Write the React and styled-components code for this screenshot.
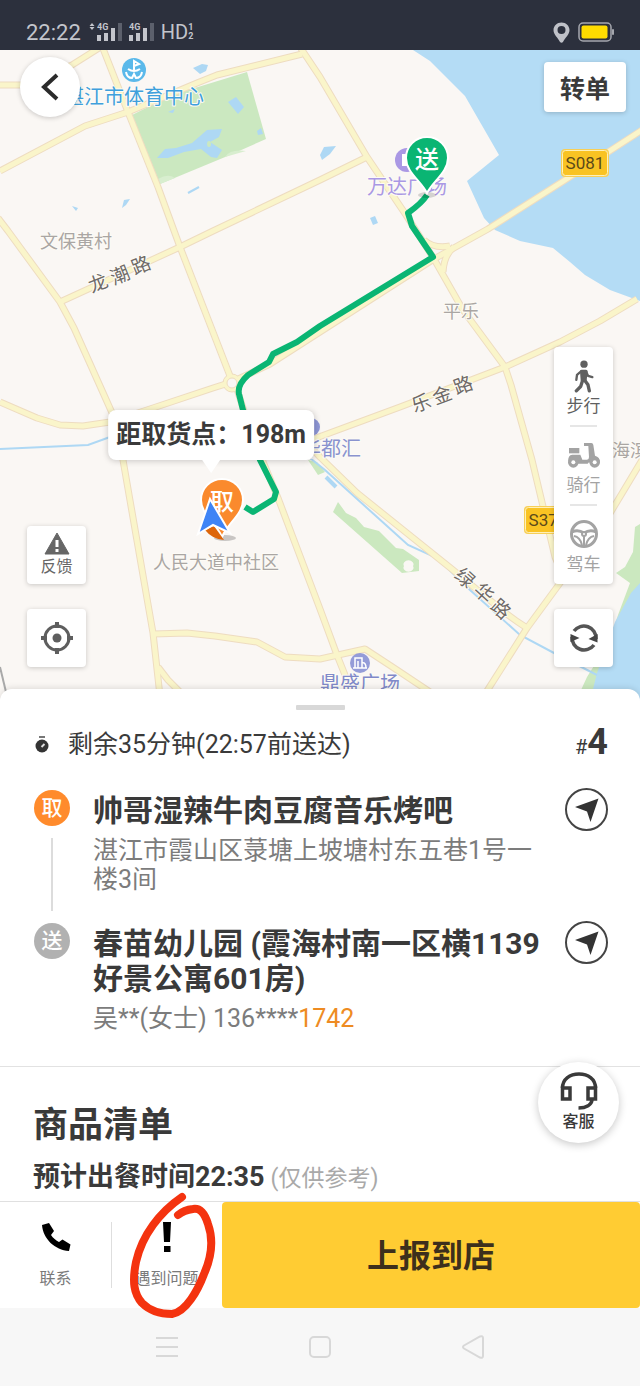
import React from 'react';
import styled, { createGlobalStyle } from 'styled-components';

const GlobalStyle = createGlobalStyle`
  * {
    box-sizing: border-box;
  }
  body {
    margin: 0;
    background: #fff;
    color: #3a3a3a;
    font-family: Roboto, 'Noto Sans CJK SC', sans-serif;
  }
  button {
    border: 0;
    padding: 0;
    background: none;
    color: inherit;
    font: inherit;
    cursor: pointer;
  }
`;

/* ---------- map data ---------- */

const roads = [
  'M0 85 L22 85 L72 65 L99 48',
  'M0 171 L85 126 L128 112 L197 83 L217 75 L302 54',
  'M102 46 L128 112 L158 187 L180 247 L230 376',
  'M298 44 L320 77 L367 157 L406 215 L434 259 L463 310 L505 367 L511 385 L532 460 L555 557 L565 580',
  'M367 157 L320 180 L213 231 L180 247 L60 302',
  'M-2 218 L8 231 L60 302 L74 328 L113 415 L123 460 L153 633 L161 705',
  'M158 667 L168 680 L192 704',
  'M0 402 L37 418 L60 425 L83 426 L110 422 L147 410 L213 388 L232 382 L270 364 L434 259 L488 229 L565 180 L642 130',
  'M637 299 L600 321 L560 342 L505 367 L400 407 L308 441',
  'M236 386 L250 430 L278 498 L320 609 L337 655 L345 675 L352 705',
  'M300 436 L320 457 L357 493 L453 570 L503 611 Q514 620 527 628',
  'M480 702 L527 628 L560 583 L600 530 L642 460',
  'M153 634 L187 633 L215 636 L257 642 L285 657 L320 659 L365 649 L397 670 L445 702',
  'M424 240 Q434 249 450 246',
  'M443 272 Q444 255 454 247',
];

const roadNames = [
  { angle: -22, glyphs: [['龙', 98, 283], ['潮', 120, 275], ['路', 141, 265]] },
  { angle: -20, glyphs: [['乐', 421, 403], ['金', 442, 395], ['路', 463, 385]] },
  { angle: 42, glyphs: [['绿', 465, 578], ['华', 484, 593], ['路', 501, 609]] },
];

const places = [
  { text: '文保黄村', x: 76, y: 248 },
  { text: '平乐', x: 461, y: 318 },
  { text: '人民大道中社区', x: 216, y: 569 },
  { text: '海滨', x: 630, y: 457 },
  { text: '湛江市体育中心', x: 134, y: 104, size: 20, fill: '#3fa0dc' },
  { text: '万达广场', x: 407, y: 194, size: 20, fill: '#aa98e4' },
  { text: '华都汇', x: 331, y: 456, size: 20, fill: '#8a93cf' },
  { text: '鼎盛广场', x: 360, y: 691, size: 20, fill: '#8089c9' },
];

/* ---------- icons ---------- */

const SignalIcon = () => (
  <svg width="26" height="20" viewBox="0 0 26 20" fill="#c3c5cc">
    <text x="0" y="8" fontSize="9" fontWeight="700">4G</text>
    <rect x="0" y="13" width="4" height="6" />
    <rect x="7" y="11" width="4" height="8" />
    <rect x="14" y="6" width="4" height="13" />
    <rect x="21" y="1" width="4" height="18" fill="#5c606c" />
  </svg>
);

const UpDownIcon = () => (
  <svg width="6" height="20" viewBox="0 0 6 20" fill="#c3c5cc">
    <path d="M3 1 L5.500 4 H.5Z M3 8 L5.500 5 H.5Z" />
  </svg>
);

const LocationIcon = () => (
  <svg width="17" height="21" viewBox="0 0 17 21">
    <path fillRule="evenodd" fill="#bfc1c8" d="M8.500 0.500 C4 .5 .5 4 .5 8 C.5 13 5 15.500 7 20 Q8.500 21.500 10 20 C12 15.500 16.500 13 16.500 8 C16.500 4 13 .5 8.500 .5Z M8.500 4 A4 4 0 1 1 8.500 12 A4 4 0 1 1 8.500 4Z" />
  </svg>
);

const BatteryIcon = () => (
  <svg width="36" height="20" viewBox="0 0 36 20">
    <rect x="1" y="1" width="32" height="18" rx="4" fill="none" stroke="#a5a7ae" strokeWidth="1.500" />
    <rect x="34" y="7" width="2" height="6" rx="1" fill="#a5a7ae" />
    <rect x="3.500" y="3.500" width="26" height="13" rx="2" fill="#ffdc00" />
  </svg>
);

const BackIcon = () => (
  <svg width="20" height="28" viewBox="0 0 20 28" fill="none" stroke="#2b2b2b" strokeWidth="4">
    <path d="M17 2 L4 14 L17 26" />
  </svg>
);

const WarningIcon = () => (
  <svg width="26" height="23" viewBox="0 0 26 23">
    <path d="M13 1 L25 22 H1Z" fill="#666" stroke="#666" strokeLinejoin="round" />
    <path d="M11.500 8 h3 v7 h-3z M11.500 17 h3 v3 h-3z" fill="#fff" />
  </svg>
);

const TargetIcon = () => (
  <svg width="32" height="32" viewBox="0 0 32 32" fill="none" stroke="#5e5e5e">
    <circle cx="16" cy="16" r="12" strokeWidth="3" />
    <circle cx="16" cy="16" r="4.500" fill="#5e5e5e" stroke="none" />
    <path d="M16 0 V6 M16 26 V32 M0 16 H6 M26 16 H32" strokeWidth="4" />
  </svg>
);

const WalkIcon = () => (
  <svg width="20" height="33" viewBox="0 0 60 98" fill="none" stroke="#5f5f5f" strokeWidth="10" strokeLinecap="round" strokeLinejoin="round">
    <circle cx="30" cy="12" r="11" fill="#5f5f5f" stroke="none" />
    <path d="M23 34 L36 34 L33 60 L25 60Z" fill="#5f5f5f" />
    <path d="M22 33 L9 44 L7 59" strokeWidth="7" />
    <path d="M36 34 L42 47 L55 51" strokeWidth="7" />
    <path d="M26 60 L20 79 L7 92 M32 60 L42 74 L46 92" />
  </svg>
);

const ScooterIcon = () => (
  <svg width="34" height="28" viewBox="0 0 102 84" fill="#a3a3a3">
    <rect x="6" y="21" width="31" height="16" />
    <path d="M51 6 H73 Q78 6 79 12 L84 44 Q99 48 99 64 H66 L62 68 H34 L26 62 H4 Q2 42 16 41 H40 L46 56 H60 Q66 56 66 48 L64 15 H51Z" />
    <circle cx="19" cy="64" r="16" />
    <circle cx="19" cy="64" r="6" fill="#fff" />
    <circle cx="83" cy="64" r="16" />
    <circle cx="83" cy="64" r="6" fill="#fff" />
  </svg>
);

const WheelIcon = () => (
  <svg width="30" height="30" viewBox="0 0 30 30" fill="none" stroke="#a3a3a3" strokeWidth="3">
    <circle cx="15" cy="15" r="12.500" />
    <path d="M3 13 Q9 10 15 14 Q21 10 27 13" />
    <path d="M15 16 V27 M5 17 Q11 18 13 26 M25 17 Q19 18 17 26" strokeWidth="2" />
    <circle cx="15" cy="15" r="3" fill="#a3a3a3" stroke="none" />
    <circle cx="15" cy="15" r="1" fill="#fff" stroke="none" />
  </svg>
);

const RefreshIcon = () => (
  <svg width="32" height="32" viewBox="0 0 32 32" fill="none" stroke="#555" strokeWidth="3.500">
    <path d="M6 9 A12.200 12.200 0 0 1 28 17" />
    <path d="M26 23 A12.200 12.200 0 0 1 4 15" />
    <path d="M29.500 12 V20.500 L20.500 17Z M2.500 20 V12 L11.500 16Z" fill="#444" stroke="none" />
  </svg>
);

const TimerIcon = () => (
  <svg width="16" height="20" viewBox="0 0 16 20">
    <rect x="5" y="1" width="6" height="2" fill="#777" />
    <circle cx="8" cy="11" r="6.500" fill="#333" />
    <path d="M7.500 12 L10.500 9" stroke="#ddd" strokeWidth="2" />
  </svg>
);

const PlaneIcon = () => (
  <svg width="24" height="24" viewBox="0 0 24 24" fill="#333">
    <path d="M0 9 L23.500 0.500 L15.500 24 L12 13.500Z" />
  </svg>
);

const HeadsetIcon = () => (
  <svg width="40" height="38" viewBox="0 0 40 38" fill="none" stroke="#3a3a3a" strokeWidth="3.500">
    <path d="M3.500 16 C3.500 7 11 2 20 2 C29 2 36.500 7 36.500 16" />
    <path d="M3.500 16 H11 V27 H3.500Z M29 16 H36.500 V27 H29Z" />
    <path d="M33 27 C33 33 27 36 19.500 36" />
  </svg>
);

const PhoneIcon = () => (
  <svg width="30" height="30" viewBox="0 0 30 30" fill="#000">
    <path d="M1 3 L8 1 L13 9 L10 13 C12 16 15 18.500 18 20 L21.500 17.500 L29.500 22.500 L28 29 C14 28 2 17 1 3Z" />
  </svg>
);

const AlertIcon = () => (
  <svg width="10" height="30" viewBox="0 0 10 30" fill="#000">
    <path d="M1 0 H9 L8 20 H2Z M2 24 H8.500 V30 H2Z" />
  </svg>
);

/* ---------- layout ---------- */

const Page = styled.div`
  display: flex;
  flex-direction: column;
  min-height: 100vh;
`;

const StatusBar = styled.header`
  display: flex;
  align-items: center;
  gap: 8px;
  height: 50px;
  padding: 14px 26px 0;
  background: #2c303d;
  color: #c3c5cc;
  font-size: 22px;
`;

const Network = styled.span`
  display: flex;
  flex: 1;
  align-items: center;
  gap: 6px;
`;

const UpDown = styled.span`
  display: flex;
  margin-right: -4px;
`;

const Hd = styled.span`
  display: flex;
  align-items: center;
  font-size: 20px;
`;

const SimSlots = styled.span`
  display: flex;
  flex-direction: column;
  font-size: 9px;
  font-weight: 700;
  line-height: 9px;
`;

const MapArea = styled.main`
  position: relative;
  display: flex;
  flex: 1;
  flex-direction: column;
  justify-content: space-between;
  min-height: 500px;
  overflow: hidden;
  background: #faf7f4;
`;

const MapDrawing = styled.svg`
  position: absolute;
  inset: 0;
  width: 100%;
  height: 100%;
`;

const TopControls = styled.div`
  position: relative;
  display: flex;
  align-items: center;
  justify-content: space-between;
  padding: 7px 14px 0 20px;
`;

const BackButton = styled.button`
  display: flex;
  align-items: center;
  justify-content: center;
  width: 60px;
  height: 60px;
  border-radius: 50%;
  background: #fff;
  box-shadow: 0 1px 5px rgba(0, 0, 0, 0.2);
`;

const TransferButton = styled.button`
  height: 50px;
  padding: 0 16px;
  border-radius: 4px;
  background: #fff;
  box-shadow: 0 1px 5px rgba(0, 0, 0, 0.2);
  font-size: 25px;
  font-weight: 700;
`;

const BottomControls = styled.div`
  position: relative;
  display: flex;
  align-items: flex-end;
  justify-content: space-between;
  padding: 0 27px 34px;
`;

const ControlColumn = styled.div`
  display: flex;
  flex-direction: column;
  gap: 25px;
`;

const SquareButton = styled.button`
  display: flex;
  flex-direction: column;
  align-items: center;
  justify-content: center;
  width: 59px;
  height: 58px;
  border-radius: 4px;
  background: #fff;
  box-shadow: 0 1px 5px rgba(0, 0, 0, 0.2);
  color: #666;
  font-size: 16px;
  line-height: 23px;
`;

const ModePanel = styled.div`
  border-radius: 4px;
  background: #fff;
  box-shadow: 0 1px 5px rgba(0, 0, 0, 0.2);
`;

const ModeButton = styled.button`
  position: relative;
  display: flex;
  flex-direction: column;
  align-items: center;
  justify-content: flex-end;
  width: 59px;
  height: 79px;
  padding-bottom: 8px;
  color: ${(props) => (props.$active ? '#5f5f5f' : '#a3a3a3')};
  font-size: 17px;
  line-height: 24px;

  &:not(:first-child)::before {
    content: '';
    position: absolute;
    top: -1px;
    left: 16px;
    right: 16px;
    height: 2px;
    background: #e6e6e6;
  }
`;

const ModeIcon = styled.span`
  display: flex;
  align-items: center;
  height: 36px;
`;

const Callout = styled.div`
  position: absolute;
  left: 33%;
  top: 63%;
  transform: translate(-50%, -100%);
  padding: 0 8px;
  border-radius: 8px;
  background: #fff;
  box-shadow: 0 1px 6px rgba(0, 0, 0, 0.2);
  font-size: 25px;
  font-weight: 700;
  line-height: 50px;
  white-space: nowrap;

  &::after {
    content: '';
    position: absolute;
    top: 100%;
    left: 50%;
    margin-left: -9px;
    border: 9px solid transparent;
    border-top: 13px solid #fff;
    border-bottom: 0;
  }
`;

const Sheet = styled.section`
  position: relative;
  margin-top: -12px;
  padding-top: 16px;
  border-radius: 12px 12px 0 0;
  background: #fff;
  box-shadow: 0 -1px 6px rgba(0, 0, 0, 0.12);
`;

const Handle = styled.div`
  width: 49px;
  height: 5px;
  margin: 0 auto;
  border-radius: 1px;
  background: #d8d8d8;
`;

const Deadline = styled.div`
  display: flex;
  align-items: center;
  padding: 17px 32px 0 34px;
  font-size: 25px;
  line-height: 30px;
`;

const DeadlineText = styled.span`
  flex: 1;
  margin-left: 18px;
`;

const OrderNumber = styled.span`
  font-size: 20px;

  strong {
    font-size: 36px;
  }
`;

const Stops = styled.ol`
  margin: 0;
  padding: 26px 32px 33px 34px;
  border-bottom: 1px solid #e2e2e2;
  list-style: none;
`;

const StopRow = styled.li`
  display: flex;
`;

const Rail = styled.div`
  display: flex;
  flex-direction: column;
  align-items: center;
  padding-top: 2px;
`;

const Badge = styled.span`
  width: 36px;
  height: 36px;
  border-radius: 50%;
  background: ${(props) => props.$color};
  color: #fff;
  font-size: 21px;
  font-weight: 500;
  line-height: 36px;
  text-align: center;
`;

const RailLine = styled.span`
  flex: 1;
  width: 2px;
  margin: 12px 0 10px;
  background: #dcdcdc;
`;

const StopBody = styled.div`
  flex: 1;
  padding: 5px 20px 0 23px;
`;

const StopTitle = styled.h2`
  margin: 0;
  font-size: 30px;
  font-weight: 700;
  line-height: 35px;
`;

const StopText = styled.p`
  margin: 8px 0 ${(props) => (props.$last ? '0' : '27px')};
  color: #7c7c7c;
  font-size: 25px;
  line-height: 29px;
`;

const PhoneTail = styled.a`
  color: #ee8b22;
  text-decoration: none;
`;

const NavigateButton = styled.button`
  display: flex;
  align-items: center;
  justify-content: center;
  width: 43px;
  height: 43px;
  border: 2px solid #444;
  border-radius: 50%;
`;

const Goods = styled.section`
  padding: 39px 33px 6px;
`;

const GoodsTitle = styled.h2`
  margin: 0;
  font-size: 35px;
  line-height: 40px;
`;

const GoodsTime = styled.p`
  margin: 15px 0 0;
  font-size: 27px;
  font-weight: 700;
  line-height: 32px;
`;

const Hint = styled.span`
  margin-left: 6px;
  color: #a9a9a9;
  font-size: 23px;
  font-weight: 400;
`;

const ServiceButton = styled.button`
  position: absolute;
  right: 21px;
  bottom: 58px;
  display: flex;
  flex-direction: column;
  align-items: center;
  width: 81px;
  height: 81px;
  padding-top: 10px;
  border-radius: 50%;
  background: #fff;
  box-shadow: 0 2px 8px rgba(0, 0, 0, 0.22);
  font-size: 16px;
  font-weight: 500;
  line-height: 24px;
`;

const ActionBar = styled.footer`
  position: relative;
  display: flex;
  height: 107px;
  border-top: 1px solid #e0e0e0;
  background: #fff;
`;

const ActionButton = styled.button`
  position: relative;
  display: flex;
  flex: 0 0 111px;
  flex-direction: column;
  align-items: center;
  justify-content: center;
  gap: 15px;
  padding-top: 2px;
  color: #7a7a7a;
  font-size: 16px;
  line-height: 24px;

  & + &::before {
    content: '';
    position: absolute;
    top: 20px;
    bottom: 20px;
    left: 0;
    width: 1px;
    background: #dedede;
  }
`;

const RedMark = styled.svg`
  position: absolute;
  top: -12px;
  left: 18px;
  z-index: 1;
  pointer-events: none;
`;

const ReportButton = styled.button`
  flex: 1;
  padding-bottom: 4px;
  border-radius: 4px;
  background: #ffcc33;
  color: #3d2f1c;
  font-size: 32px;
  font-weight: 700;
`;

const SystemNav = styled.nav`
  display: flex;
  justify-content: center;
  height: 78px;
  background: #f7f7f7;
`;

const SystemButton = styled.button`
  display: flex;
  align-items: center;
  justify-content: center;
  width: 153px;

  svg {
    fill: none;
    stroke: #d8d8d8;
    stroke-width: 2;
  }
`;

/* ---------- map ---------- */

const Shield = ({ x, y, width, text }) => (
  <g transform={`translate(${x} ${y})`}>
    <rect width={width} height="28" rx="4" fill="#f7cf57" />
    <rect x="1.500" y="1.500" width={width - 3} height="25" rx="3" fill="#f9c323" stroke="#fff0b8" />
    <text x={width / 2} y="20" fontSize="17" fill="#5b4a1a" textAnchor="middle">{text}</text>
  </g>
);

const CityMap = () => (
  <MapDrawing viewBox="0 50 640 651" preserveAspectRatio="xMidYMid slice" aria-hidden="true">
    <rect x="-400" y="0" width="1440" height="800" fill="#faf7f4" />

    {/* water and parks */}
    <path fill="#b4dcf5" d="M413 50 L430 61 L465 96 L499 155 L467 181 L484 218 L495 230 L520 241 L553 248 L570 262 L585 275 L610 290 L640 301 V50Z" />
    <path fill="#cbe8bf" d="M640 524 L635 527 L633 552 L625 567 L616 573 L630 583 L618 615 L610 640 L587 677 L576 701 H640Z" />
    <path fill="#b4dcf5" d="M640 583 L631 593 L615 622 L597 673 L590 701 H640Z" />
    <path fill="#cbe8c0" d="M132 115 L172 95 L247 72 L266 139 L230 155 L160 184Z" />
    <path fill="#d8eecf" d="M160 184 L158 179 Q168 173 175 178Z M225 157 Q230 149 246 151Z" />
    <path fill="#cbe8bf" fillRule="evenodd" d="M338 502 L333 512 L402 573 L419 571 V560 L403 549 L396 548 L379 531 L364 527 L356 518 L346 513Z M404 566 a5 4 0 1 1 9 0 a5 4 0 1 1 -9 0Z" />
    <path fill="#cbe8bf" d="M308 460 L317 462 L325 472 L318 475Z" />
    <g fill="#aed8f4">
      <path d="M157 158 L165 149 L176 148 L192 143 L207 130 L222 129 L219 137 L210 142 L222 150 L217 158 L211 157 L201 149 L184 152 L168 158Z" />
      <path d="M193 68 L202 64 L208 65 L206 71 L200 74Z" />
      <path d="M228 102 L236 97 L244 107 L238 114 L233 108Z" />
      <path d="M168 112 L175 109 L173 113Z M257 131 l4 -3 2 6 -5 1Z" />
      <path d="M72 206 L78 208 L76 211Z M122 208 L124 200 L130 199 L126 205Z" />
      <path d="M320 155 L324 147 L336 146 L330 154 L322 160Z" />
      <path d="M370 218 L375 216 L378 223 L373 225Z" />
    </g>
    <ellipse cx="209" cy="144" rx="2" ry="3" fill="#cbe8c0" />
    <g fill="none" stroke="#aed8f4" strokeWidth="2">
      <path d="M188 193 L199 187" />
      <path d="M0 449 L88 445 L110 437" />
      <path d="M310 458 L325 470 L408 545 L437 558 L470 590 L520 635 L554 653 L597 675" />
      <path d="M326 477 L336 487" strokeWidth="4" />
    </g>
    <path d="M0 667 L6 692" stroke="#a9a9a9" strokeWidth="2" />

    {/* roads */}
    <g fill="none" stroke="#eedcc0" strokeWidth="7" strokeLinejoin="round">
      {roads.map((d) => <path key={d} d={d} />)}
    </g>
    <circle cx="232" cy="383" r="9" fill="#faf5ca" stroke="#eedcc0" />
    <g fill="none" stroke="#faf5ca" strokeWidth="5" strokeLinejoin="round">
      {roads.map((d) => <path key={d} d={d} />)}
    </g>
    <circle cx="232" cy="383" r="5" fill="#faf7f4" stroke="#eedcc0" />

    {/* delivery route */}
    <path
      fill="none"
      stroke="#0ab573"
      strokeWidth="6"
      strokeLinejoin="round"
      d="M427 195 Q422 203 408 213 L412 226 L433 257 L320 326 L297 342 L273 354 L269 362 L248 375 Q237 385 239 394 L243 410 L260 460 L276 492 L274 499 L253 512 L245 507"
    />

    {/* places */}
    <circle cx="134" cy="70" r="12" fill="#5bb9ea" />
    <path d="M134 70 V61 L139 64 L134 66 M128 69 Q134 73 140 69 M126 72 Q127 78 132 78 L134 74 L136 78 Q141 78 142 72" fill="none" stroke="#fff" strokeWidth="2" />
    <circle cx="407" cy="160" r="12" fill="#aa98e4" />
    <path d="M402 154 h6 v12 h-6z" fill="#fff" />
    <circle cx="311" cy="427" r="9" fill="#8f98d8" />
    <circle cx="360" cy="663" r="10" fill="#949cd8" />
    <path d="M355 668 V658 H362 V668 M362 663 Q366 662 366 668 M353 668 H367 M358 661 V668" fill="none" stroke="#fff" strokeWidth="1.500" />
    <g paintOrder="stroke" stroke="#fdfbf6" strokeWidth="2" strokeLinejoin="round" textAnchor="middle">
      {places.map((p) => (
        <text key={p.text} x={p.x} y={p.y} fontSize={p.size || 18} fill={p.fill || '#aaa6a3'}>{p.text}</text>
      ))}
      {roadNames.map((road) => road.glyphs.map(([glyph, x, y]) => (
        <text key={glyph + x} transform={`translate(${x} ${y}) rotate(${road.angle})`} y="7" fontSize="19" fill="#6f6a67">{glyph}</text>
      )))}
    </g>
    <Shield x={561} y={149} width={48} text="S081" />
    <Shield x={524} y={506} width={48} text="S373" />

    {/* drop-off pin */}
    <ellipse cx="427" cy="195" rx="9" ry="3" fill="#000" opacity="0.15" />
    <path d="M427 193 C421 181 406 172 406 158 A21 21 0 0 1 448 158 C448 172 433 181 427 193Z" fill="#0ab573" stroke="#fff" strokeWidth="2" />
    <text x="427" y="168" fontSize="24" fontWeight="500" fill="#fff" textAnchor="middle">送</text>

    {/* pick-up pin and courier */}
    <ellipse cx="225" cy="538" rx="11" ry="3" fill="#000" opacity="0.2" />
    <path d="M222 537 C216 523 201 514 201 500 A21 21 0 0 1 243 500 C243 514 228 523 222 537Z" fill="#fa8a2d" stroke="#fff" strokeWidth="2" />
    <text x="222" y="510" fontSize="24" fontWeight="500" fill="#fff" textAnchor="middle">取</text>
    <path d="M205 530 L214 526 L224 540 Q212 539 205 530Z" fill="#dd6509" />
    <path d="M210 499 L230 533 L213 525 L198 534Z" fill="#3f84f6" stroke="#fff" strokeWidth="2" />
  </MapDrawing>
);

export default function App() {
  return (
    <Page>
      <GlobalStyle />
      <StatusBar>
        <span>22:22</span>
        <Network>
          <UpDown><UpDownIcon /></UpDown>
          <SignalIcon />
          <SignalIcon />
          <Hd>
            HD
            <SimSlots>
              <span>1</span>
              <span>2</span>
            </SimSlots>
          </Hd>
        </Network>
        <LocationIcon />
        <BatteryIcon />
      </StatusBar>

      <MapArea>
        <CityMap />
        <TopControls>
          <BackButton aria-label="返回"><BackIcon /></BackButton>
          <TransferButton>转单</TransferButton>
        </TopControls>
        <Callout>距取货点：198m</Callout>
        <BottomControls>
          <ControlColumn>
            <SquareButton>
              <WarningIcon />
              反馈
            </SquareButton>
            <SquareButton aria-label="定位"><TargetIcon /></SquareButton>
          </ControlColumn>
          <ControlColumn>
            <ModePanel>
              <ModeButton $active>
                <ModeIcon><WalkIcon /></ModeIcon>
                步行
              </ModeButton>
              <ModeButton>
                <ModeIcon><ScooterIcon /></ModeIcon>
                骑行
              </ModeButton>
              <ModeButton>
                <ModeIcon><WheelIcon /></ModeIcon>
                驾车
              </ModeButton>
            </ModePanel>
            <SquareButton aria-label="刷新"><RefreshIcon /></SquareButton>
          </ControlColumn>
        </BottomControls>
      </MapArea>

      <Sheet>
        <Handle />
        <Deadline>
          <TimerIcon />
          <DeadlineText>剩余35分钟(22:57前送达)</DeadlineText>
          <OrderNumber>#<strong>4</strong></OrderNumber>
        </Deadline>
        <Stops>
          <StopRow>
            <Rail>
              <Badge $color="#ff8b2c">取</Badge>
              <RailLine />
            </Rail>
            <StopBody>
              <StopTitle>帅哥湿辣牛肉豆腐音乐烤吧</StopTitle>
              <StopText>湛江市霞山区菉塘上坡塘村东五巷1号一楼3间</StopText>
            </StopBody>
            <NavigateButton aria-label="导航到取货点"><PlaneIcon /></NavigateButton>
          </StopRow>
          <StopRow>
            <Rail>
              <Badge $color="#b1b1b1">送</Badge>
            </Rail>
            <StopBody>
              <StopTitle>春苗幼儿园 (霞海村南一区横1139好景公寓601房)</StopTitle>
              <StopText $last>
                吴**(女士) 136****<PhoneTail href="#call">1742</PhoneTail>
              </StopText>
            </StopBody>
            <NavigateButton aria-label="导航到送货点"><PlaneIcon /></NavigateButton>
          </StopRow>
        </Stops>
        <Goods>
          <GoodsTitle>商品清单</GoodsTitle>
          <GoodsTime>
            预计出餐时间22:35
            <Hint>(仅供参考)</Hint>
          </GoodsTime>
        </Goods>
        <ServiceButton>
          <HeadsetIcon />
          客服
        </ServiceButton>
      </Sheet>

      <ActionBar>
        <ActionButton>
          <PhoneIcon />
          联系
        </ActionButton>
        <ActionButton>
          <AlertIcon />
          遇到问题
          <RedMark width="90" height="130" viewBox="129 1190 90 130" fill="none" stroke="#f4330f" strokeWidth="8" strokeLinecap="round">
            <path d="M182 1197 C160 1212 142 1235 136 1262 C132 1282 134 1294 142 1303 C150 1311 162 1314 172 1314 C186 1312 198 1290 204 1274 C212 1256 213 1238 208 1224 C204 1211 199 1208 193 1209 Q184 1210 178 1215" />
          </RedMark>
        </ActionButton>
        <ReportButton>上报到店</ReportButton>
      </ActionBar>

      <SystemNav>
        <SystemButton aria-label="菜单">
          <svg width="22" height="22" viewBox="0 0 22 22"><path d="M0 2 H22 M0 11 H22 M0 20 H22" /></svg>
        </SystemButton>
        <SystemButton aria-label="主页">
          <svg width="22" height="22" viewBox="0 0 22 22"><rect x="1" y="1" width="20" height="20" rx="4" /></svg>
        </SystemButton>
        <SystemButton aria-label="后退">
          <svg width="22" height="24" viewBox="0 0 22 24"><path d="M2 10.500 L18 1.500 Q21 0.500 21 3 V21 Q21 23.500 18 22.500 L2 13.500 Q0 12 2 10.500Z" /></svg>
        </SystemButton>
      </SystemNav>
    </Page>
  );
}
